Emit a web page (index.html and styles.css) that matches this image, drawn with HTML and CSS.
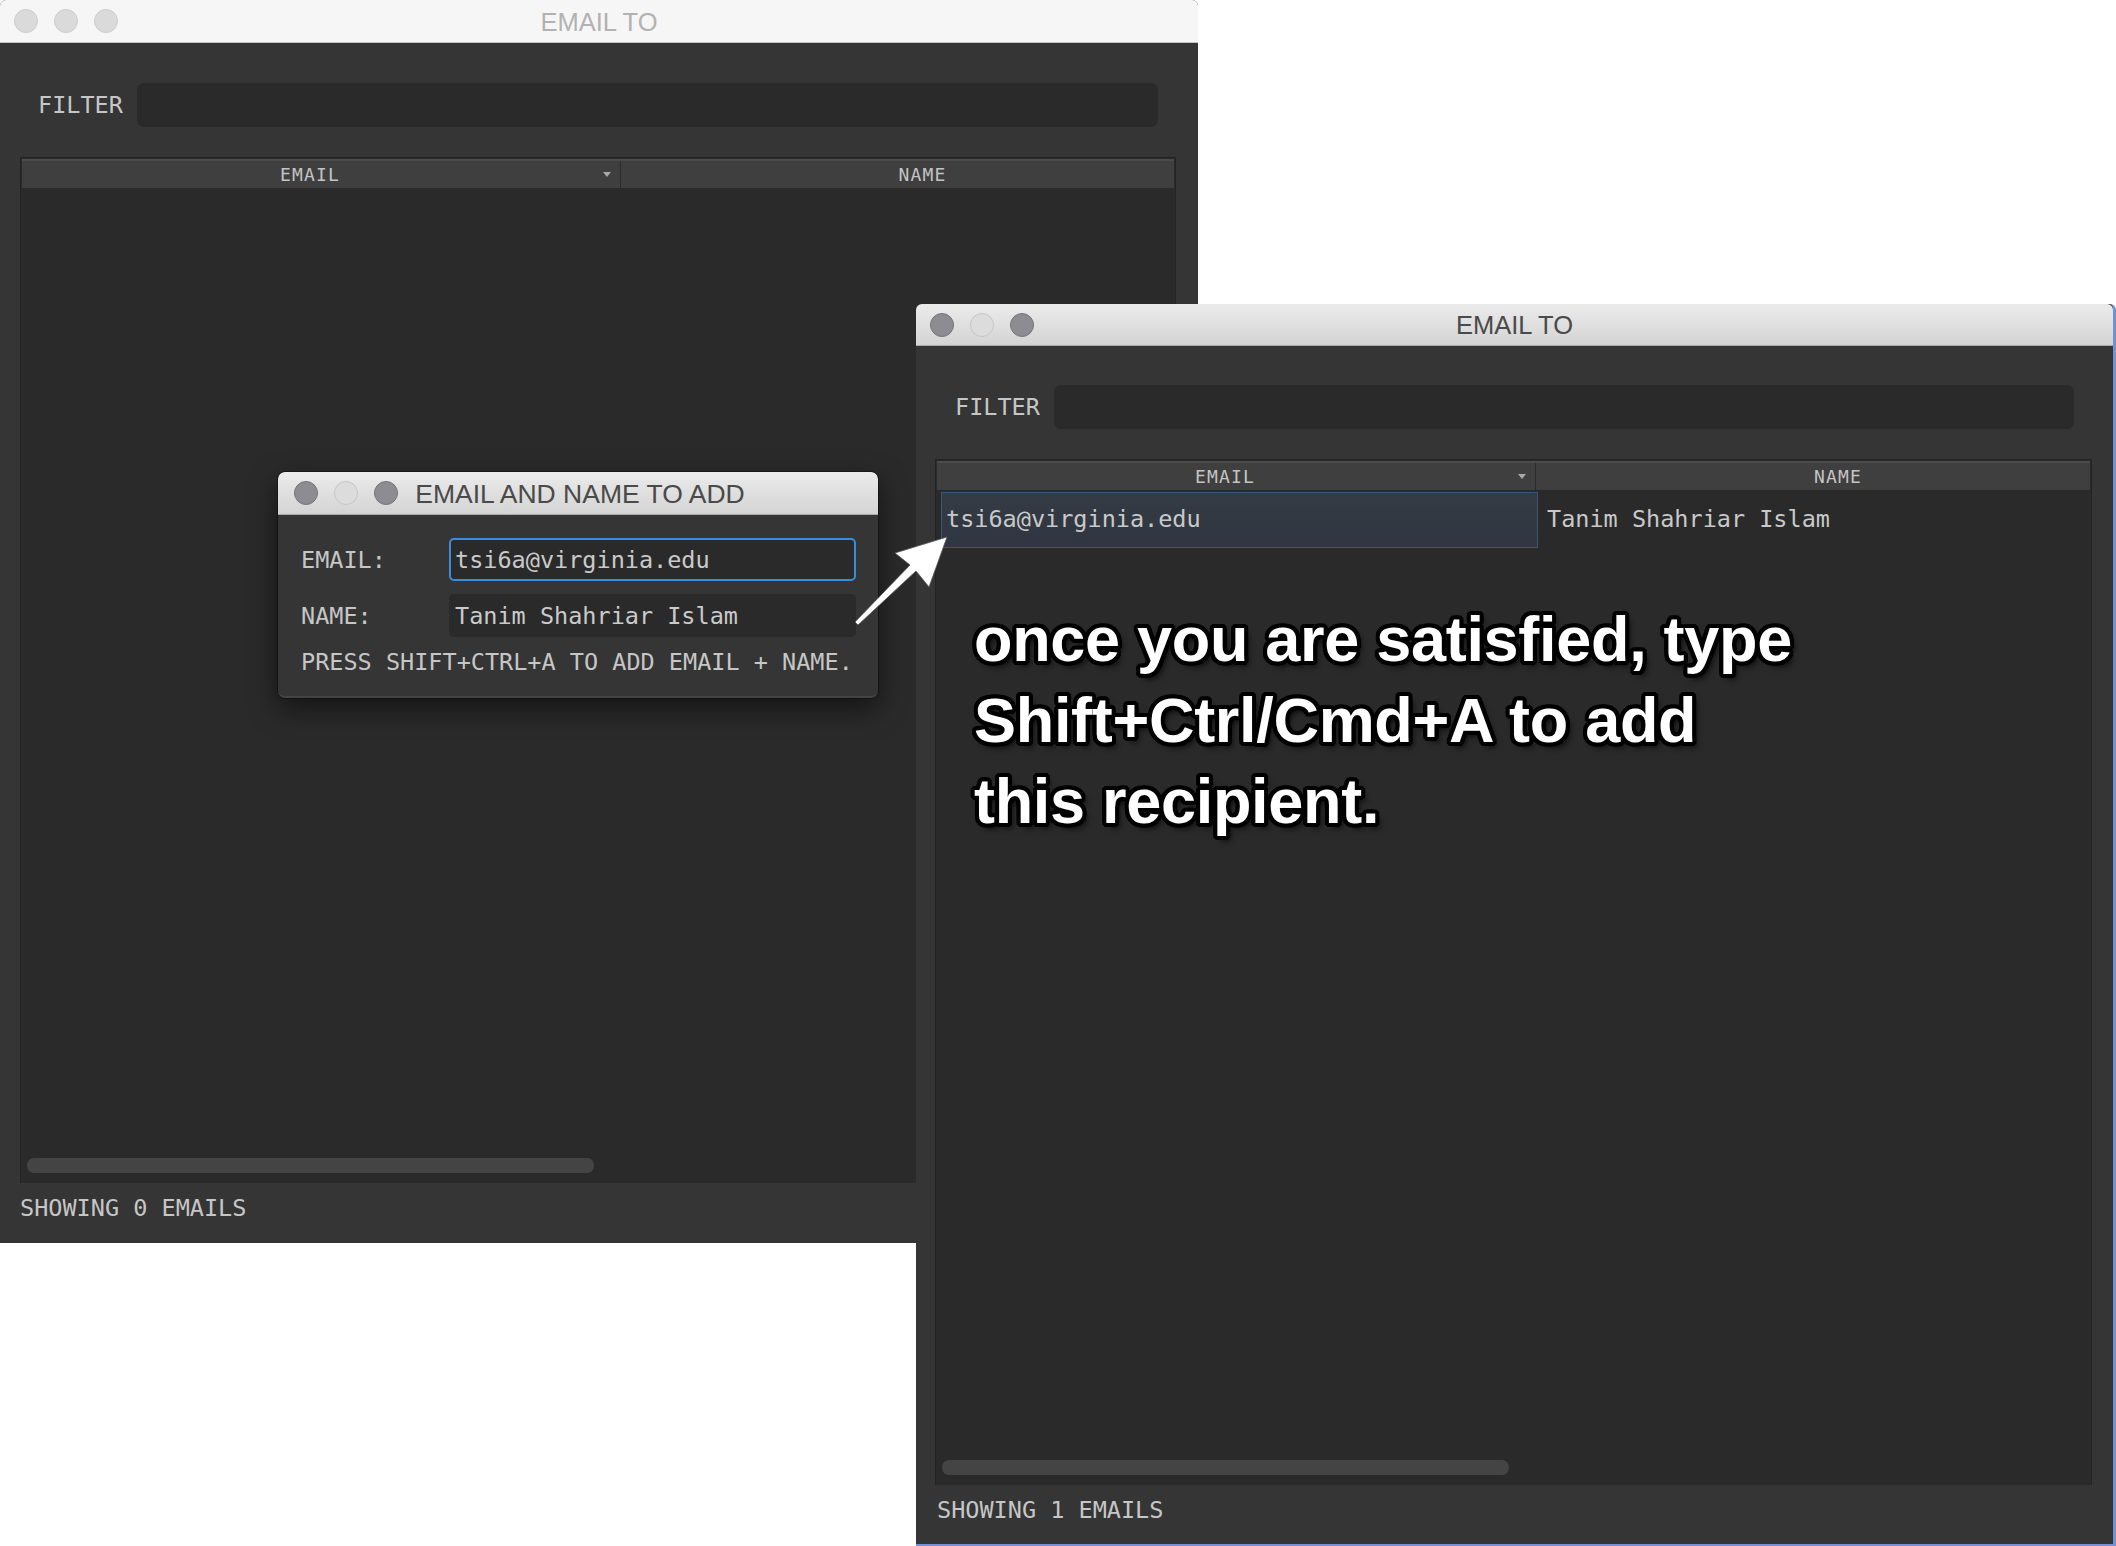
FILE: index.html
```html
<!DOCTYPE html>
<html>
<head>
<meta charset="utf-8">
<title>Email To</title>
<link rel="stylesheet" href="styles.css">
</head>
<body>
<div class="desktop">

  <section class="window win-back">
    <header class="titlebar inactive">
      <div class="lights"><span class="light"></span><span class="light"></span><span class="light"></span></div>
      <div class="title">EMAIL TO</div>
      <div></div>
    </header>
    <div class="win-body">
      <div class="filter-row"><span class="filter-label">FILTER</span><div class="filter-input"></div></div>
      <div class="table">
        <div class="thead">
          <div class="th th-email">EMAIL<span class="sort"></span></div>
          <div class="th th-name">NAME</div>
        </div>
        <div class="tbody">
          <div class="rows"></div>
          <div class="hscroll"><div class="thumb"></div></div>
        </div>
      </div>
      <div class="status">SHOWING 0 EMAILS</div>
    </div>
  </section>

  <section class="dialog">
    <header class="titlebar active">
      <div class="lights"><span class="light"></span><span class="light off"></span><span class="light"></span></div>
      <div class="title">EMAIL AND NAME TO ADD</div>
      <div></div>
    </header>
    <div class="dlg-body">
      <span class="dlg-label">EMAIL:</span>
      <div class="dlg-input focused">tsi6a@virginia.edu</div>
      <span class="dlg-label">NAME:</span>
      <div class="dlg-input">Tanim Shahriar Islam</div>
      <div class="dlg-hint">PRESS SHIFT+CTRL+A TO ADD EMAIL + NAME.</div>
    </div>
  </section>

  <section class="window win-front">
    <header class="titlebar active">
      <div class="lights"><span class="light"></span><span class="light off"></span><span class="light"></span></div>
      <div class="title">EMAIL TO</div>
      <div></div>
    </header>
    <div class="win-body">
      <div class="filter-row"><span class="filter-label">FILTER</span><div class="filter-input"></div></div>
      <div class="table">
        <div class="thead">
          <div class="th th-email">EMAIL<span class="sort"></span></div>
          <div class="th th-name">NAME</div>
        </div>
        <div class="tbody">
          <div class="rows">
            <div class="row">
              <div class="td td-email selected">tsi6a@virginia.edu</div>
              <div class="td td-name">Tanim Shahriar Islam</div>
            </div>
          </div>
          <div class="hscroll"><div class="thumb"></div></div>
        </div>
      </div>
      <div class="status">SHOWING 1 EMAILS</div>
    </div>
  </section>

  <svg class="arrow" width="110" height="105" viewBox="848 528 110 105">
    <polygon points="947,537 895,553 910,565 855,622 858,625 916,571 929,587" fill="#ffffff" stroke="#555" stroke-width="0.8" stroke-linejoin="round"/>
  </svg>

  <div class="note">once you are satisfied, type<br>Shift+Ctrl/Cmd+A to add<br>this recipient.</div>

</div>
</body>
</html>
```

FILE: styles.css
```css
* {
  box-sizing: border-box;
  margin: 0;
  padding: 0;
}

html, body {
  background: #ffffff;
}

body {
  margin: 0;
  width: 2116px;
  height: 1546px;
  overflow: hidden;
  font-family: "DejaVu Sans Mono", "Liberation Mono", monospace;
}

.desktop {
  position: relative;
  width: 2116px;
  height: 1546px;
}

/* ---------- windows ---------- */
.window {
  position: absolute;
  display: flex;
  flex-direction: column;
  background: #353535;
  border-radius: 6px 6px 0 0;
}

.win-back {
  left: 0;
  top: 0;
  width: 1198px;
  height: 1243px;
}

.win-front {
  left: 916px;
  top: 304px;
  width: 1200px;
  height: 1242px;
  border-right: 3px solid #7391d4;
  border-bottom: 2px solid #7391d4;
}

.titlebar {
  flex: none;
  height: 43px;
  display: grid;
  grid-template-columns: 1fr auto 1fr;
  align-items: center;
  border-radius: 6px 6px 0 0;
  border-bottom: 1px solid #c4c4c4;
}

.titlebar.inactive {
  background: #f6f6f6;
}

.titlebar.active {
  background: linear-gradient(#ebebeb, #d4d4d4);
  border-bottom-color: #a9a9a9;
}

.win-front .titlebar {
  height: 42px;
}

.lights {
  display: flex;
  gap: 16px;
  padding-left: 14px;
}

.dialog .lights {
  padding-left: 16px;
}

.light {
  width: 24px;
  height: 24px;
  border-radius: 50%;
  background: #dadada;
  border: 1px solid #cdcdcd;
}

.active .light {
  background: #8d8c92;
  border-color: #76757b;
}

.active .light.off {
  background: #dcdcdc;
  border-color: #c6c6c6;
}

.title {
  font-family: "Liberation Sans", Arial, sans-serif;
  font-size: 25.5px;
  color: #b2b2b2;
  white-space: nowrap;
  padding-top: 2px;
}

.active .title {
  color: #4a4a4a;
}

.dialog .title {
  font-size: 26.5px;
  padding-left: 4px;
}

.win-body {
  flex: 1;
  display: flex;
  flex-direction: column;
  padding: 0 22px 0 20px;
  min-height: 0;
}

.win-front .win-body {
  padding: 0 21px 0 19px;
}

.filter-row {
  display: flex;
  align-items: center;
  gap: 14px;
  margin-top: 40px;
  padding: 0 18px 0 18px;
  height: 44px;
}

.win-front .filter-row {
  margin-top: 39px;
  padding-left: 20px;
}

.filter-label {
  font-size: 23.5px;
  color: #c6c6c6;
}

.filter-input {
  flex: 1;
  height: 44px;
  background: #2a2a2a;
  border-radius: 7px;
}

/* ---------- table ---------- */
.table {
  margin-top: 30px;
  flex: 1;
  display: flex;
  flex-direction: column;
  border: 1px solid #232323;
  border-bottom: none;
  background: #2a2a2a;
  min-height: 0;
}

.thead {
  display: flex;
  height: 29px;
  margin: 1px 1px 0 1px;
  background: #3f3f3f;
  border-top: 2px solid #4b4b4b;
  flex: none;
}

.th {
  position: relative;
  display: flex;
  align-items: center;
  justify-content: center;
  font-size: 18px;
  letter-spacing: 1.2px;
  color: #c4c4c4;
}

.th-email {
  width: 599px;
  padding-right: 22px;
  border-right: 1px solid #2b2b2b;
}

.th-name {
  flex: 1;
  padding-left: 50px;
}

.sort {
  position: absolute;
  right: 9px;
  top: 11px;
  width: 0;
  height: 0;
  border-left: 4px solid transparent;
  border-right: 4px solid transparent;
  border-top: 5px solid #a8a8a8;
}

.tbody {
  flex: 1;
  display: flex;
  flex-direction: column;
  background: #2a2a2a;
  min-height: 0;
}

.rows {
  flex: 1;
}

.row {
  display: flex;
  height: 56px;
  margin-top: 2px;
  padding-left: 5px;
}

.td {
  display: flex;
  align-items: center;
  font-size: 23.5px;
  color: #c9c9c9;
  white-space: nowrap;
}

.td-email {
  width: 597px;
  padding-left: 4px;
  padding-bottom: 2px;
}

.td-email.selected {
  background: linear-gradient(#353b44, #2e3641);
  border: 1px solid #3b5677;
}

.td-name {
  flex: 1;
  padding-left: 9px;
  padding-bottom: 2px;
}

.hscroll {
  flex: none;
  height: 25px;
  padding: 0 0 0 6px;
}

.thumb {
  width: 567px;
  height: 15px;
  background: #444444;
  border-radius: 7px;
}

.status {
  flex: none;
  height: 60px;
  padding-bottom: 10px;
  display: flex;
  align-items: center;
  font-size: 23.5px;
  color: #c6c6c6;
}

.win-front .status {
  padding-left: 2px;
  height: 59px;
}

/* ---------- dialog ---------- */
.dialog {
  position: absolute;
  left: 278px;
  top: 472px;
  width: 600px;
  height: 226px;
  display: flex;
  flex-direction: column;
  background: #353535;
  border-radius: 7px;
  border-bottom: 2px solid #444;
  box-shadow: 0 0 0 1px rgba(0, 0, 0, 0.35), 0 10px 28px rgba(0, 0, 0, 0.55);
  overflow: hidden;
}

.dlg-body {
  display: grid;
  grid-template-columns: 148px 1fr;
  row-gap: 13px;
  align-items: center;
  padding: 23px 22px 0 23px;
}

.dlg-label {
  font-size: 23.5px;
  color: #c6c6c6;
}

.dlg-input {
  height: 43px;
  display: flex;
  align-items: center;
  padding-left: 6px;
  background: #2a2a2a;
  border-radius: 5px;
  font-size: 23.5px;
  color: #cacaca;
  white-space: nowrap;
}

.dlg-input.focused {
  border: 2px solid #3b8ddc;
  padding-left: 4px;
}

.dlg-hint {
  grid-column: 1 / 3;
  font-size: 23.5px;
  line-height: 24px;
  color: #c6c6c6;
  white-space: nowrap;
}

/* ---------- annotation ---------- */
.arrow {
  position: absolute;
  left: 848px;
  top: 528px;
}

.note {
  position: absolute;
  left: 974px;
  top: 599px;
  font-family: "Liberation Sans", Arial, sans-serif;
  font-weight: 700;
  font-size: 63px;
  letter-spacing: -0.3px;
  line-height: 81px;
  color: #ffffff;
  white-space: nowrap;
  text-shadow:
    4px 0 0 #000, -4px 0 0 #000, 0 4px 0 #000, 0 -4px 0 #000,
    3px 3px 0 #000, -3px -3px 0 #000, 3px -3px 0 #000, -3px 3px 0 #000,
    4px 2px 0 #000, 2px 4px 0 #000, -4px -2px 0 #000, -2px -4px 0 #000,
    4px -2px 0 #000, -2px 4px 0 #000, -4px 2px 0 #000, 2px -4px 0 #000,
    4px 5px 6px rgba(0, 0, 0, 0.8);
}
```
